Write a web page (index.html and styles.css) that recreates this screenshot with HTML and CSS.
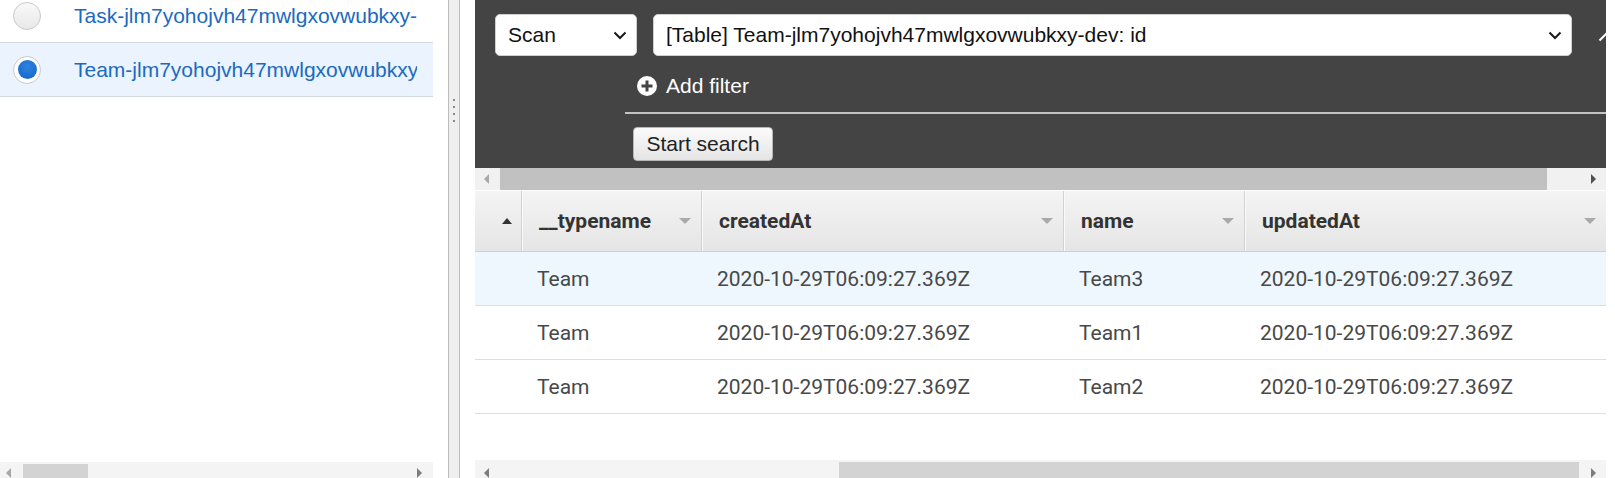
FILE: index.html
```html
<!DOCTYPE html>
<html>
<head>
<meta charset="utf-8">
<link rel="stylesheet" href="styles.css">
</head>
<body>
<div class="app">
  <div class="left">
    <div class="list">
      <div class="item">
        <span class="radio"></span>
        <span class="item-text">Task-jlm7yohojvh47mwlgxovwubkxy-dev</span>
      </div>
      <div class="item item-selected">
        <span class="radio radio-on"><span class="radio-dot"></span></span>
        <span class="item-text">Team-jlm7yohojvh47mwlgxovwubkxy-dev</span>
      </div>
    </div>
    <div class="lscroll">
      <span class="arrow-left arrow-light lscroll-la"></span>
      <span class="lscroll-thumb"></span>
      <span class="arrow-right arrow-mid lscroll-ra"></span>
    </div>
  </div>
  <div class="gap"></div>
  <div class="splitter">
    <span class="grip"></span><span class="grip"></span><span class="grip"></span><span class="grip"></span>
  </div>
  <div class="gap"></div>
  <div class="right">
    <div class="toolbar">
      <div class="selects">
        <div class="select sel-scan"><span class="sel-text">Scan</span>
          <svg class="chev" width="14" height="9" viewBox="0 0 14 9"><path d="M1.5 1.5 L7 7 L12.5 1.5" fill="none" stroke="#1a1a1a" stroke-width="2"/></svg>
        </div>
        <div class="select sel-table"><span class="sel-text">[Table] Team-jlm7yohojvh47mwlgxovwubkxy-dev: id</span>
          <svg class="chev" width="14" height="9" viewBox="0 0 14 9"><path d="M1.5 1.5 L7 7 L12.5 1.5" fill="none" stroke="#1a1a1a" stroke-width="2"/></svg>
        </div>
      </div>
      <svg class="collapse" width="16" height="10" viewBox="0 0 16 10"><path d="M1.5 8.5 L8 2 L14.5 8.5" fill="none" stroke="#fff" stroke-width="2"/></svg>
      <div class="filter-area">
        <div class="add-filter">
          <svg class="plus" width="20" height="20" viewBox="0 0 20 20"><circle cx="10" cy="10" r="10" fill="#fff"/><path d="M10 4.5 V15.5 M4.5 10 H15.5" stroke="#444" stroke-width="3"/></svg>
          <span class="add-text">Add filter</span>
        </div>
        <div class="divline"></div>
        <button class="btn">Start search</button>
      </div>
    </div>
    <div class="hscroll">
      <span class="arrow-left arrow-light hs-la"></span>
      <span class="hs-thumb"></span>
      <span class="arrow-right arrow-dark hs-ra"></span>
    </div>
    <div class="grid head">
      <div class="hcell hsort"><span class="tri-up"></span></div>
      <div class="hcell">__typename<span class="tri-down"></span></div>
      <div class="hcell">createdAt<span class="tri-down"></span></div>
      <div class="hcell">name<span class="tri-down"></span></div>
      <div class="hcell">updatedAt<span class="tri-down"></span></div>
    </div>
    <div class="grid row row-hl">
      <div class="cell"></div>
      <div class="cell">Team</div>
      <div class="cell">2020-10-29T06:09:27.369Z</div>
      <div class="cell">Team3</div>
      <div class="cell">2020-10-29T06:09:27.369Z</div>
    </div>
    <div class="grid row">
      <div class="cell"></div>
      <div class="cell">Team</div>
      <div class="cell">2020-10-29T06:09:27.369Z</div>
      <div class="cell">Team1</div>
      <div class="cell">2020-10-29T06:09:27.369Z</div>
    </div>
    <div class="grid row">
      <div class="cell"></div>
      <div class="cell">Team</div>
      <div class="cell">2020-10-29T06:09:27.369Z</div>
      <div class="cell">Team2</div>
      <div class="cell">2020-10-29T06:09:27.369Z</div>
    </div>
    <div class="spacer"></div>
    <div class="bscroll">
      <span class="arrow-left arrow-mid bs-la"></span>
      <span class="bs-thumb"></span>
      <span class="arrow-right arrow-mid bs-ra"></span>
    </div>
  </div>
  <div class="edge"></div>
</div>
</body>
</html>
```
FILE: styles.css
```css
html, body {
  margin: 0;
  padding: 0;
  background: #fff;
}
body {
  width: 1615px;
  height: 478px;
  overflow: hidden;
  font-family: "Liberation Sans", Arial, sans-serif;
}
.app {
  display: flex;
  height: 478px;
}

/* left panel */
.left {
  width: 433px;
  display: flex;
  flex-direction: column;
  overflow: hidden;
}
.list {
  flex: 1;
  margin-top: -11px;
}
.item {
  height: 53px;
  border-bottom: 1px solid #d3dae2;
  display: flex;
  align-items: center;
  padding-left: 13px;
}
.item-selected {
  background: #eaf3fe;
}
.radio {
  width: 26px;
  height: 26px;
  border-radius: 50%;
  border: 1px solid #c9c9c9;
  background: linear-gradient(#f9f9f9, #e8e8e8);
  flex: none;
  display: flex;
  align-items: center;
  justify-content: center;
}
.radio-on {
  background: #fff;
}
.radio-dot {
  width: 19px;
  height: 19px;
  border-radius: 50%;
  background: radial-gradient(circle at 50% 35%, #2f82e0, #1463c6);
}
.item-text {
  margin-left: 33px;
  width: 343px;
  overflow: hidden;
  white-space: nowrap;
  font-size: 21px;
  color: #1b6ac0;
}
.lscroll {
  height: 16px;
  background: #f4f4f4;
  position: relative;
  flex: none;
}
.lscroll-thumb {
  position: absolute;
  left: 23px;
  top: 2px;
  width: 65px;
  height: 14px;
  background: #d3d3d3;
}
.lscroll-la { position: absolute; left: 6px; top: 6px; }
.lscroll-ra { position: absolute; left: 417px; top: 6px; }

.arrow-left, .arrow-right {
  width: 0;
  height: 0;
  border-top: 5px solid transparent;
  border-bottom: 5px solid transparent;
}
.arrow-left { border-right: 5px solid #a3a3a3; }
.arrow-right { border-left: 5px solid #a3a3a3; }
.arrow-light.arrow-left { border-right-color: #a8a8a8; }
.arrow-mid.arrow-right { border-left-color: #7d7d7d; }
.arrow-mid.arrow-left { border-right-color: #7d7d7d; }
.arrow-dark.arrow-right { border-left-color: #505050; }

.gap {
  width: 15px;
  flex: none;
}
.splitter {
  width: 10px;
  flex: none;
  background: #efefef;
  border-left: 1px solid #bcbcbc;
  border-right: 1px solid #bcbcbc;
  display: flex;
  flex-direction: column;
  align-items: center;
  padding-top: 99px;
  gap: 5px;
  box-sizing: content-box;
}
.grip {
  width: 2px;
  height: 2px;
  background: #8a8a8a;
}

/* right panel */
.right {
  width: 1131px;
  flex: none;
  display: flex;
  flex-direction: column;
  overflow: hidden;
}
.toolbar {
  height: 168px;
  flex: none;
  background: #444444;
  padding-top: 14px;
  box-sizing: border-box;
  position: relative;
  overflow: hidden;
}
.selects {
  display: flex;
  gap: 16px;
  height: 42px;
  margin-left: 20px;
  margin-right: 34px;
}
.select {
  background: #fff;
  border-radius: 5px;
  border: 1px solid #d0d0d0;
  box-sizing: border-box;
  display: flex;
  align-items: center;
  justify-content: space-between;
  padding-left: 12px;
  padding-right: 9px;
  font-size: 21px;
  color: #111;
}
.sel-scan {
  width: 142px;
  flex: none;
}
.sel-table {
  flex: 1;
}
.collapse {
  position: absolute;
  right: -8px;
  top: 32px;
}
.filter-area {
  margin-left: 150px;
}
.add-filter {
  height: 56px;
  display: flex;
  align-items: center;
  padding-left: 12px;
  padding-top: 4px;
  box-sizing: border-box;
  gap: 9px;
}
.add-text {
  font-size: 21px;
  color: #fff;
}
.divline {
  height: 2px;
  background: #c2c2c2;
}
.btn {
  display: block;
  margin-top: 13px;
  margin-left: 8px;
  width: 140px;
  height: 34px;
  border: 1px solid #b8b8b8;
  border-radius: 4px;
  background: linear-gradient(#fbfbfb, #e4e4e4);
  font-family: "Liberation Sans", Arial, sans-serif;
  font-size: 21px;
  color: #222;
  padding: 0;
}

.hscroll {
  height: 22px;
  flex: none;
  background: #f1f1f1;
  border-bottom: 1px solid #fff;
  position: relative;
}
.hs-thumb {
  position: absolute;
  left: 25px;
  top: 0;
  width: 1047px;
  height: 22px;
  background: #c1c1c1;
}
.hs-la { position: absolute; left: 9px; top: 6px; }
.hs-ra { position: absolute; left: 1116px; top: 6px; }

.grid {
  display: grid;
  grid-template-columns: 47px 180px 362px 181px 361px;
  flex: none;
  font-family: Roboto, "Liberation Sans", sans-serif;
  font-size: 21px;
}
.head {
  height: 61px;
  box-sizing: border-box;
  border-bottom: 1px solid #cfcfcf;
  background: linear-gradient(#f4f4f4, #e5e5e5);
}
.hcell {
  position: relative;
  display: flex;
  align-items: center;
  padding-left: 17px;
  font-weight: bold;
  color: #333;
  border-right: 1px solid #d2d2d2;
  box-shadow: 1px 0 0 #fafafa;
}
.hcell:last-child {
  border-right: none;
  box-shadow: none;
}
.hsort {
  padding-left: 27px;
}
.tri-up {
  width: 0;
  height: 0;
  border-left: 5px solid transparent;
  border-right: 5px solid transparent;
  border-bottom: 6px solid #333;
}
.tri-down {
  position: absolute;
  right: 10px;
  top: 27px;
  width: 0;
  height: 0;
  border-left: 6px solid transparent;
  border-right: 6px solid transparent;
  border-top: 6px solid #a9a9a9;
}
.row {
  height: 54px;
  box-sizing: border-box;
  border-bottom: 1px solid #dedede;
}
.row-hl {
  background: #eff7fe;
}
.cell {
  display: flex;
  align-items: center;
  padding-left: 15px;
  color: #484848;
  white-space: nowrap;
}
.spacer {
  flex: 1;
}
.bscroll {
  height: 18px;
  flex: none;
  background: #f4f4f4;
  position: relative;
}
.bs-thumb {
  position: absolute;
  left: 364px;
  top: 2px;
  width: 740px;
  height: 16px;
  background: #d3d3d3;
}
.bs-la { position: absolute; left: 9px; top: 8px; }
.bs-ra { position: absolute; left: 1116px; top: 8px; }
.edge {
  width: 9px;
  flex: none;
}
```
